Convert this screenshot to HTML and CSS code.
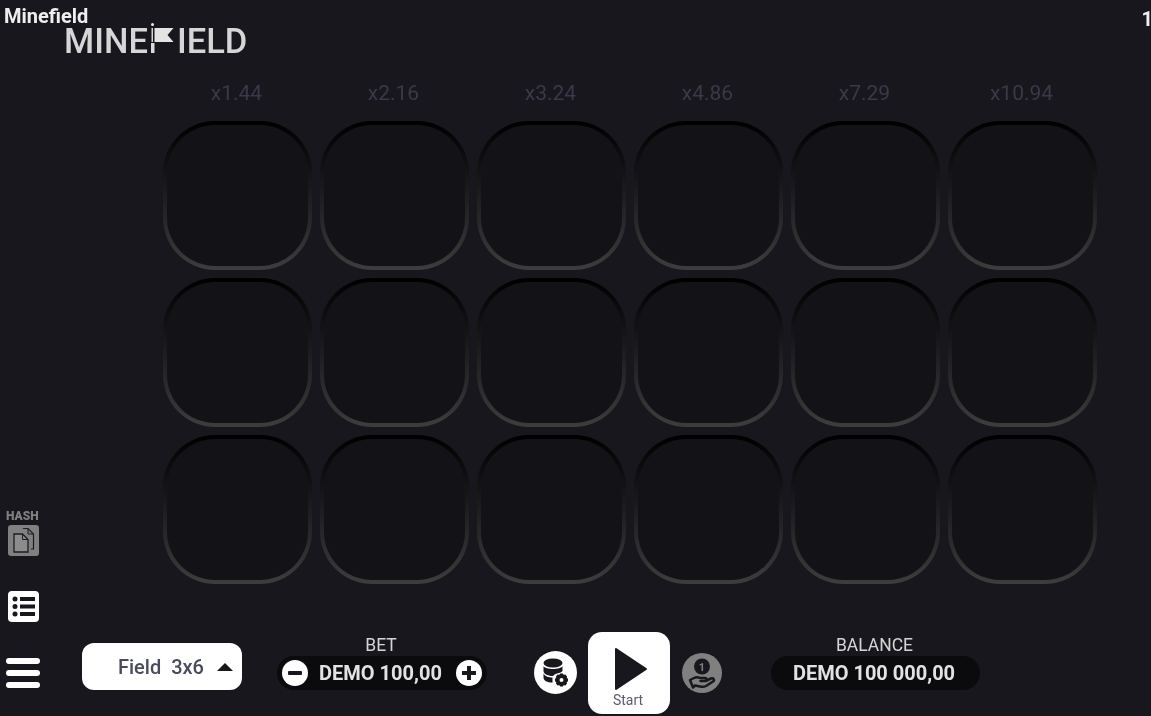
FILE: index.html
```html
<!DOCTYPE html>
<html lang="en">
<head>
    <meta charset="UTF-8">
    <meta name="viewport" content="width=device-width, initial-scale=1.0">
    <title>Minefield</title>
    <link rel="stylesheet" href="styles.css">
</head>
<body>

<div class="game">
    <header class="top-bar">
        <span class="title">Minefield</span>
        <span class="counter">1</span>
    </header>

    <div class="logo">
        <span>MINE</span>
        <svg class="logo-flag" width="26" height="32" viewBox="0 0 26 32">
            <circle cx="1.500" cy="1.500" r="1.500" fill="#eeeeee"/>
            <rect x="0.500" y="5" width="1.500" height="14" fill="#d8d8d8"/>
            <rect x="0" y="20" width="3.500" height="10" fill="#dcdcdc"/>
            <path d="M3.500 5H22.500L16.500 12L22.500 19H3.500Z" fill="#e4e4e4"/>
        </svg>
        <span>IELD</span>
    </div>

    <div class="middle">
        <aside class="rail">
            <div class="hash">
                <span class="hash-label">HASH</span>
                <svg class="hash-icon" width="31" height="31" viewBox="0 0 31 31">
                    <rect width="31" height="31" rx="3" fill="#808080"/>
                    <path d="M15 3.500H20L25.500 9V24H23" fill="none" stroke="#1c1c22" stroke-width="1.200"/>
                    <path d="M20 3.500V9H25.500" fill="none" stroke="#1c1c22" stroke-width="1"/>
                    <path d="M6 9H14.500L20 14.500V27H6Z" fill="#8c8c8c" stroke="#1c1c22" stroke-width="1.300"/>
                    <path d="M14.500 9V14.500H20" fill="none" stroke="#1c1c22" stroke-width="1"/>
                </svg>
            </div>
            <svg class="list-icon" width="31" height="31" viewBox="0 0 31 31">
                <rect width="31" height="31" rx="4" fill="#fff"/>
                <circle cx="7" cy="8" r="2.500" fill="#17171d"/>
                <circle cx="7" cy="15.500" r="2.500" fill="#17171d"/>
                <circle cx="7" cy="23" r="2.500" fill="#17171d"/>
                <rect x="12" y="6" width="15" height="4" fill="#17171d"/>
                <rect x="12" y="13.500" width="15" height="4" fill="#17171d"/>
                <rect x="12" y="21" width="15" height="4" fill="#17171d"/>
            </svg>
        </aside>

        <main class="board">
            <div class="mult">x1.44</div>
            <div class="mult">x2.16</div>
            <div class="mult">x3.24</div>
            <div class="mult">x4.86</div>
            <div class="mult">x7.29</div>
            <div class="mult">x10.94</div>

            <div class="cell"></div><div class="cell"></div><div class="cell"></div>
            <div class="cell"></div><div class="cell"></div><div class="cell"></div>
            <div class="cell"></div><div class="cell"></div><div class="cell"></div>
            <div class="cell"></div><div class="cell"></div><div class="cell"></div>
            <div class="cell"></div><div class="cell"></div><div class="cell"></div>
            <div class="cell"></div><div class="cell"></div><div class="cell"></div>
        </main>
    </div>

    <footer class="controls">
        <div class="burger"><i></i><i></i><i></i></div>

        <button class="field-select">
            <span>Field&nbsp; 3x6</span>
            <span class="arrow-up"></span>
        </button>

        <div class="money bet">
            <div class="money-label">BET</div>
            <div class="pill">
                <svg width="26" height="26" viewBox="0 0 26 26">
                    <circle cx="13" cy="13" r="13" fill="#fff"/>
                    <rect x="6" y="11" width="14" height="4" rx="1" fill="#17171d"/>
                </svg>
                <span class="amount">DEMO 100,00</span>
                <svg width="26" height="26" viewBox="0 0 26 26">
                    <circle cx="13" cy="13" r="13" fill="#fff"/>
                    <path d="M11 6H15V11H20V15H15V20H11V15H6V11H11Z" fill="#17171d"/>
                </svg>
            </div>
        </div>

        <svg class="db-icon" width="43" height="43" viewBox="0 0 43 43">
            <circle cx="21.500" cy="21.500" r="21.500" fill="#fff"/>
            <ellipse cx="19" cy="12" rx="9.500" ry="4.500" fill="#17171d"/>
            <path d="M9.500 15C11 19 27 19 28.500 15V19.500C28.500 20.500 27 21.500 25 22C22 22.500 20 23.500 19 25C13 25 9.500 22.500 9.500 20Z" fill="#17171d"/>
            <path d="M9.500 22.500C11 25.500 15 26.500 18.500 26.500L18.500 31.500C13 31.500 9.500 29.500 9.500 26.500Z" fill="#17171d"/>
            <circle cx="27.500" cy="29" r="4" fill="none" stroke="#17171d" stroke-width="4"/>
            <path d="M27.500 22.500V24.500M27.500 33.500V35.500M21 29H23M32 29H34M22.900 24.400L24.300 25.800M30.700 32.200L32.100 33.600M22.900 33.600L24.300 32.200M30.700 25.800L32.100 24.400" stroke="#17171d" stroke-width="3"/>
        </svg>

        <button class="start-btn">
            <svg class="play" width="34" height="44" viewBox="0 0 34 44">
                <path d="M2 2L32 22L2 42Z" fill="#17171d" stroke="#17171d" stroke-width="2" stroke-linejoin="round"/>
            </svg>
            <span class="start-label">Start</span>
        </button>

        <svg class="coin-icon" width="40" height="40" viewBox="0 0 40 40">
            <circle cx="20" cy="20" r="20" fill="#808080"/>
            <circle cx="20" cy="13.500" r="8" fill="#17171d"/>
            <text x="20" y="17.500" text-anchor="middle" class="coin-text">1</text>
            <path d="M8 27L12 25C14 24 16 24 18 25H23C25 25 25 28 23 28H18.500H23.500L29 25.500C31.500 24.500 33 27 31 28.500L24 33C22 34 20 34 18 33.500L13 32.500L11 34.500Z" fill="none" stroke="#17171d" stroke-width="2.500" stroke-linejoin="round"/>
        </svg>

        <div class="money balance">
            <div class="money-label">BALANCE</div>
            <div class="pill pill-center">
                <span class="amount">DEMO 100 000,00</span>
            </div>
        </div>
    </footer>
</div>

</body>
</html>
```

FILE: styles.css
```css
body {
    margin: 0;
    background-color: #17171d;
    font-family: 'Roboto', 'Liberation Sans', sans-serif;
    overflow: hidden;
}
.game {
    width: 1151px;
    height: 716px;
    display: flex;
    flex-direction: column;
    overflow: hidden;
    will-change: transform;
}

/* header */
.top-bar {
    height: 25px;
    display: flex;
    justify-content: space-between;
    padding: 6px 0 0 4px;
    box-sizing: border-box;
    color: #eeeeee;
    font-size: 20px;
    font-weight: 700;
    line-height: 21px;
}
.counter {
    margin: 3px -2px 0 0;
}
.logo {
    height: 55px;
    padding-left: 64px;
    display: flex;
    align-items: flex-start;
    color: #d6d6d6;
    font-size: 34.500px;
    font-weight: 500;
    line-height: 32px;
}
.logo-flag {
    margin: -2px 0 0 3px;
}

/* middle area */
.middle {
    flex: 1;
    display: flex;
}
.rail {
    width: 163px;
    box-sizing: border-box;
    padding: 0 0 8px 8px;
    display: flex;
    flex-direction: column;
    justify-content: flex-end;
    gap: 35px;
}
.hash {
    display: flex;
    flex-direction: column;
    gap: 3px;
}
.hash-label {
    margin-left: -2px;
    color: #808080;
    font-size: 12px;
    font-weight: 900;
    line-height: 12px;
}
.hash-icon, .list-icon {
    display: block;
}
.board {
    display: grid;
    grid-template-columns: repeat(6, 149px);
    grid-template-rows: 33px repeat(3, 149px);
    gap: 8px;
}
.mult {
    padding: 1px 2px 0 0;
    text-align: center;
    color: #3a3948;
    font-size: 21px;
    line-height: 25px;
}
.cell {
    box-sizing: border-box;
    border: 4px solid transparent;
    border-radius: 52px;
    background: linear-gradient(#131317, #131317) padding-box,
                linear-gradient(#000000, #1a1a1d 45%, #3d3d3d) border-box;
}

/* bottom controls */
.controls {
    height: 86px;
    display: flex;
    align-items: flex-start;
}
.burger {
    width: 34px;
    margin: 28px 0 0 6px;
    display: flex;
    flex-direction: column;
    gap: 6px;
}
.burger i {
    display: block;
    height: 6px;
    border-radius: 3px;
    background-color: #fff;
}
.field-select {
    width: 160px;
    height: 47px;
    margin: 13px 0 0 42px;
    padding: 0 9px 0 36px;
    border: none;
    border-radius: 12px;
    background-color: #fff;
    color: #4a4a5e;
    font-family: inherit;
    font-size: 20px;
    font-weight: 500;
    display: flex;
    align-items: center;
    justify-content: space-between;
}
.arrow-up {
    width: 0;
    height: 0;
    border-left: 8px solid transparent;
    border-right: 8px solid transparent;
    border-bottom: 8px solid #17171d;
}
.money {
    margin-top: 5px;
    color: #d6d6d6;
}
.bet {
    width: 210px;
    margin-left: 35px;
}
.balance {
    width: 209px;
    margin-left: 49px;
}
.money-label {
    height: 21px;
    padding-right: 2px;
    text-align: center;
    font-size: 17.500px;
    line-height: 20px;
}
.pill {
    height: 34px;
    padding: 0 5px;
    border-radius: 17px;
    background-color: #0b0b0d;
    display: flex;
    align-items: center;
    justify-content: space-between;
}
.pill-center {
    justify-content: center;
}
.amount {
    margin-right: 3px;
    font-size: 20px;
    font-weight: 700;
    color: #e2e2e2;
}
.db-icon {
    margin: 21px 0 0 47px;
}
.start-btn {
    width: 82px;
    height: 82px;
    margin: 2px 0 0 11px;
    padding: 15px 0 0;
    border: none;
    border-radius: 14px;
    background-color: #fff;
    color: #5c5c6e;
    font-family: inherit;
    font-size: 14px;
    display: flex;
    flex-direction: column;
    align-items: center;
    gap: 1px;
    box-sizing: border-box;
}
.play {
    margin-left: 4px;
}
.start-label {
    margin-right: 2px;
}
.coin-icon {
    margin: 23px 0 0 12px;
}
.coin-text {
    fill: #808080;
    font-size: 11px;
    font-weight: 700;
}
```
